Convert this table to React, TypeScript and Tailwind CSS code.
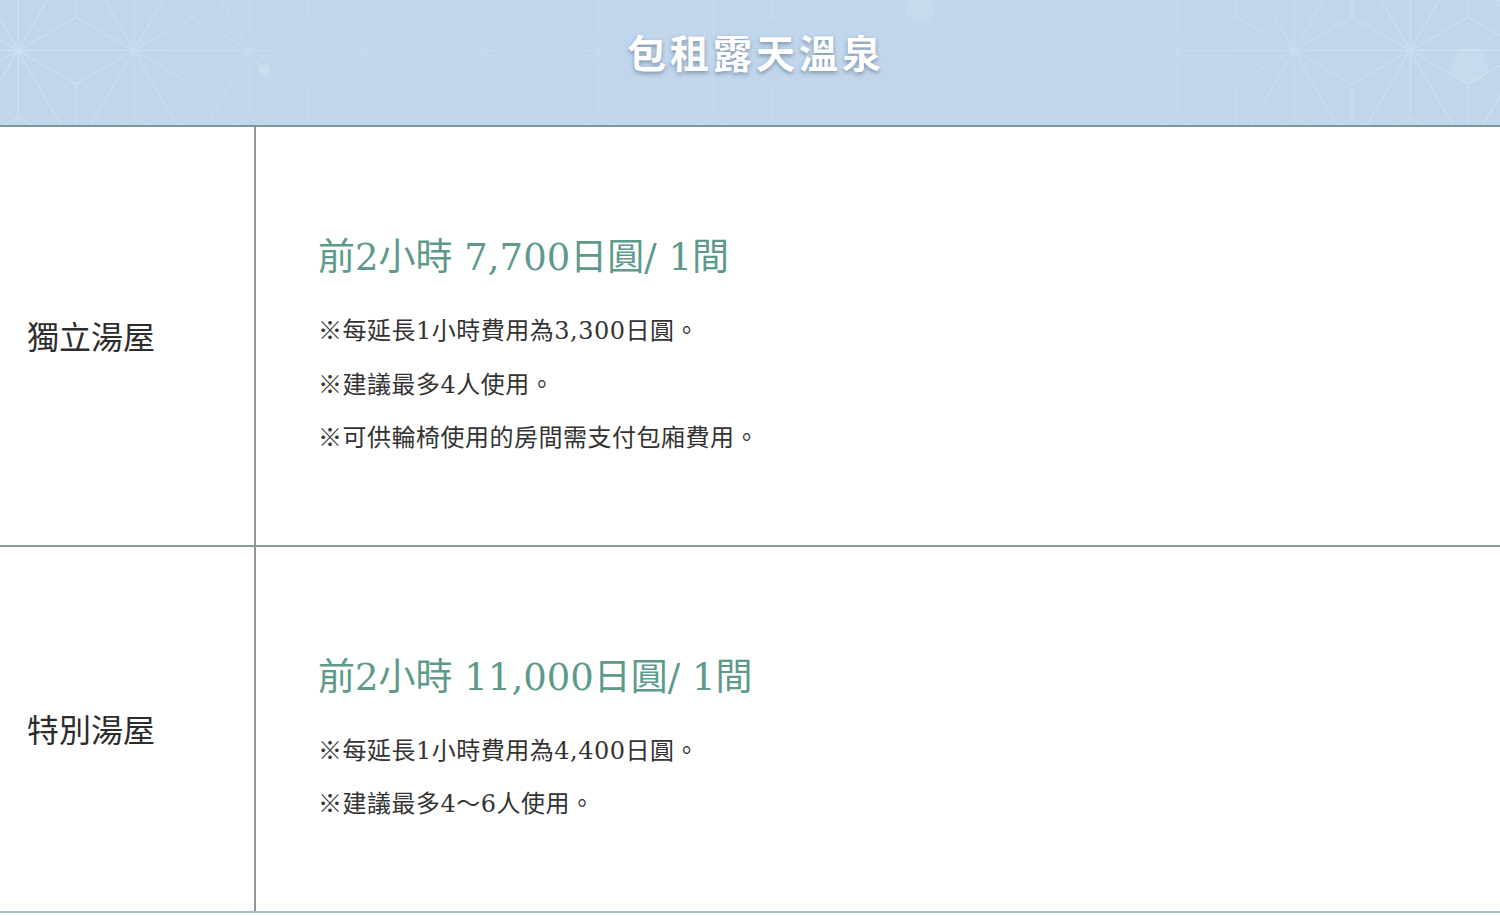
import React, { useMemo } from 'react';

const FONT = '"DejaVu Serif", "Noto Sans CJK TC", serif';

type Row = {
  label: string;
  price: string;
  notes: string[];
};

const rows: Row[] = [
  {
    label: '獨立湯屋',
    price: '前2小時 7,700日圓/ 1間',
    notes: [
      '※每延長1小時費用為3,300日圓。',
      '※建議最多4人使用。',
      '※可供輪椅使用的房間需支付包廂費用。',
    ],
  },
  {
    label: '特別湯屋',
    price: '前2小時 11,000日圓/ 1間',
    notes: ['※每延長1小時費用為4,400日圓。', '※建議最多4～6人使用。'],
  },
];

// asanoha (hemp leaf) pattern drawn on a triangle grid
function Asanoha() {
  const d = useMemo(() => {
    const s = 116;
    const h = (s * Math.sqrt(3)) / 2;
    const v = (i: number, j: number): [number, number] => [i * s + (j % 2 ? s / 2 : 0) - 40, j * h - 50];
    const parts: string[] = [];
    const tri = (a: [number, number], b: [number, number], c: [number, number]) => {
      const cx = (a[0] + b[0] + c[0]) / 3;
      const cy = (a[1] + b[1] + c[1]) / 3;
      parts.push(`M${a[0]} ${a[1]}L${b[0]} ${b[1]}L${c[0]} ${c[1]}Z`);
      [a, b, c].forEach((p) => parts.push(`M${cx} ${cy}L${p[0]} ${p[1]}`));
    };
    for (let j = 0; j < 3; j++) {
      for (let i = -1; i < 15; i++) {
        const even = j % 2 === 0;
        tri(v(i, j), v(i + 1, j), even ? v(i, j + 1) : v(i + 1, j + 1));
        tri(v(i, j + 1), v(i + 1, j + 1), even ? v(i + 1, j) : v(i, j));
      }
    }
    return parts.join('');
  }, []);

  return (
    <svg className="absolute inset-0 h-full w-full" viewBox="0 0 1500 125" preserveAspectRatio="none">
      <defs>
        <linearGradient id="fade" x1="0" x2="1" y1="0" y2="0">
          <stop offset="0" stopColor="#fff" stopOpacity="0.9" />
          <stop offset="0.25" stopColor="#fff" stopOpacity="0.3" />
          <stop offset="0.5" stopColor="#fff" stopOpacity="0.5" />
          <stop offset="0.65" stopColor="#fff" stopOpacity="0.15" />
          <stop offset="1" stopColor="#fff" stopOpacity="0.9" />
        </linearGradient>
        <mask id="m">
          <rect width="1500" height="125" fill="url(#fade)" />
        </mask>
      </defs>
      <g mask="url(#m)">
        <path d={d} fill="none" stroke="#ffffff" strokeOpacity="0.3" strokeWidth="1.2" />
      </g>
      <circle cx="1470" cy="65" r="18" fill="#ffffff" fillOpacity="0.12" />
      <circle cx="920" cy="8" r="14" fill="#ffffff" fillOpacity="0.12" />
      <circle cx="265" cy="70" r="6" fill="#ffffff" fillOpacity="0.2" />
    </svg>
  );
}

export default function App() {
  return (
    <div className="w-[1500px] bg-white text-[#333]" style={{ fontFamily: FONT }}>
      {/* Header band */}
      <div className="relative flex h-[125px] items-center justify-center overflow-hidden bg-[#c0d6ec] pb-[17px]">
        <Asanoha />
        <h2
          className="relative pl-[12px] text-[39px] font-bold tracking-[4px] text-white"
          style={{ textShadow: '0 2px 4px rgba(40,60,90,0.45)' }}
        >
          包租露天溫泉
        </h2>
      </div>

      {/* Table */}
      <div className="border-t-2 border-b-2 border-t-[#7e979b] border-b-[#9fc3c6]">
        {rows.map((row, idx) => (
          <div
            key={row.label}
            className={`flex ${idx > 0 ? 'border-t-2 border-[#8c9a9b]' : ''}`}
          >
            <div className="flex w-[256px] shrink-0 items-center border-r-2 border-[#8c9a9b] pl-[27px] pt-[5px]">
              <span className="text-[32px] leading-none text-[#2d2d2d]">{row.label}</span>
            </div>
            <div className="flex-1 pl-[62px] pt-[106px] pb-[79px]">
              <div className="text-[37px] leading-[50px] text-[#5e9a8c]">{row.price}</div>
              <div className="mt-[22px]">
                {row.notes.map((n) => (
                  <p key={n} className="text-[24px] leading-[53.5px] tracking-[0.5px] text-[#333]">
                    {n}
                  </p>
                ))}
              </div>
            </div>
          </div>
        ))}
      </div>
    </div>
  );
}
